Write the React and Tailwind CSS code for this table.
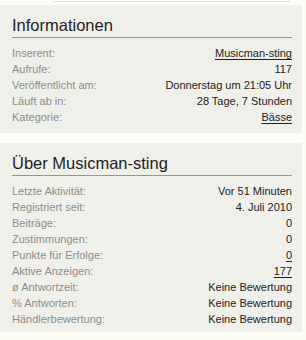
export default function App() {
  const info = [
    ["Inserent:", "Musicman-sting", true],
    ["Aufrufe:", "117", false],
    ["Veröffentlicht am:", "Donnerstag um 21:05 Uhr", false],
    ["Läuft ab in:", "28 Tage, 7 Stunden", false],
    ["Kategorie:", "Bässe", true],
  ];
  const about = [
    ["Letzte Aktivität:", "Vor 51 Minuten", false],
    ["Registriert seit:", "4. Juli 2010", false],
    ["Beiträge:", "0", false],
    ["Zustimmungen:", "0", false],
    ["Punkte für Erfolge:", "0", true],
    ["Aktive Anzeigen:", "177", true],
    ["ø Antwortzeit:", "Keine Bewertung", false],
    ["% Antworten:", "Keine Bewertung", false],
    ["Händlerbewertung:", "Keine Bewertung", false],
  ];
  const Row = ({ r }) => (
    <div className="flex justify-between leading-[16px] h-[16px]">
      <span className="text-[#8e8e88]">{r[0]}</span>
      <span className={r[2] ? "text-[#222] underline underline-offset-2" : "text-[#222]"}>{r[1]}</span>
    </div>
  );
  const Panel = ({ title, rows, pb }) => (
    <div className={`w-[302px] bg-[#f0f0eb] pl-3 pr-[10px] pt-[9px] ${pb}`}>
      <div className="text-[16.5px] leading-[22px] text-[#1e1e1e] pb-[1px] border-b border-[#9a9a78]">{title}</div>
      <div className="pt-[7px] text-[11px]">
        {rows.map((r) => <Row key={r[0]} r={r} />)}
      </div>
    </div>
  );
  return (
    <div className="w-[306px] h-[340px] bg-[#fdfdf6] overflow-hidden" style={{ fontFamily: '"Liberation Sans", Arial, sans-serif' }}>
      <div className="ml-[53px] w-[237px] h-[2px] bg-white border-b border-r border-[#dcdcd4] rounded-br" />
      <div className="h-[3px]" />
      <Panel title="Informationen" rows={info} pb="pb-[8px]" />
      <div className="h-[10px]" />
      <Panel title="Über Musicman-sting" rows={about} pb="pb-[5px]" />
    </div>
  );
}
